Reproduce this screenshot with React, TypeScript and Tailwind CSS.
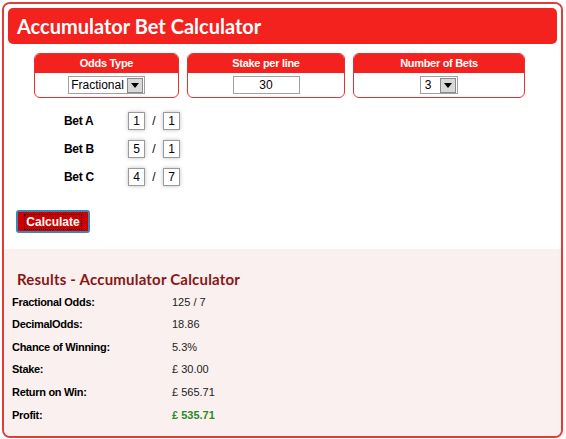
import React from "react";

const F = { fontFamily: '"Liberation Sans", Arial, sans-serif' };

function Arrow() {
  return (
    <div className="w-[16px] h-[15px] bg-[#d8d8d8] border border-[#8a8a8a] flex items-center justify-center ml-[1px]">
      <svg width="8" height="5" viewBox="0 0 8 5"><path d="M0 0h8L4 5z" fill="#000" /></svg>
    </div>
  );
}

function Box({ title, w, children }: { title: string; w: string; children: React.ReactNode }) {
  return (
    <div className={`${w} h-[45px] border border-[#e8302c] rounded-[6px] overflow-hidden flex flex-col bg-white`}>
      <div className="h-[19px] bg-[#f4221e] text-white text-[11px] font-bold flex items-center justify-center tracking-[-0.3px]">
        {title}
      </div>
      <div className="flex-1 flex items-center justify-center">{children}</div>
    </div>
  );
}

function Small({ v }: { v: string }) {
  return (
    <div className="w-[17px] h-[18px] border border-[#9a9a9a] bg-white text-[12px] text-black flex items-center justify-center shadow-[0_0_4px_rgba(0,0,0,0.25)]">
      {v}
    </div>
  );
}

export default function App() {
  const bets = [
    ["Bet A", "1", "1"],
    ["Bet B", "5", "1"],
    ["Bet C", "4", "7"],
  ];
  const rows: [string, string, boolean?][] = [
    ["Fractional Odds:", "125 / 7"],
    ["DecimalOdds:", "18.86"],
    ["Chance of Winning:", "5.3%"],
    ["Stake:", "£ 30.00"],
    ["Return on Win:", "£ 565.71"],
    ["Profit:", "£ 535.71", true],
  ];
  return (
    <div className="w-[566px] h-[439px] bg-white" style={F}>
      <div className="ml-[2px] mt-[2px] w-[561px] h-[436px] border-2 border-[#e33b36] rounded-[8px] overflow-hidden flex flex-col">
        <div className="px-[4px] pt-[4px] bg-white">
          <div className="h-[36px] bg-[#f4221e] rounded-[5px] pl-[9px] flex items-center text-white text-[20px] font-bold" style={{ fontFamily: 'Lato, sans-serif' }}>
            Accumulator Bet Calculator
          </div>
          <div className="mt-[9px] pl-[26px] flex gap-[8px]">
            <Box title="Odds Type" w="w-[145px]">
              <div className="flex items-center border border-[#a0a0a0] h-[18px] pl-[2px] pr-[1px] bg-white">
                <span className="text-[12px] text-black mr-[2px]">Fractional</span>
                <Arrow />
              </div>
            </Box>
            <Box title="Stake per line" w="w-[158px]">
              <div className="w-[67px] h-[18px] border border-[#a0a0a0] text-[12px] text-black flex items-center justify-center bg-white">30</div>
            </Box>
            <Box title="Number of Bets" w="w-[172px]">
              <div className="flex items-center border border-[#a0a0a0] h-[18px] pl-[4px] pr-[1px] bg-white">
                <span className="text-[12px] text-black mr-[8px]">3</span>
                <Arrow />
              </div>
            </Box>
          </div>
          <div className="mt-[14px] pl-[56px] flex flex-col gap-[10px]">
            {bets.map(([l, a, b]) => (
              <div key={l} className="flex items-center h-[18px]">
                <span className="w-[64px] text-[12px] font-bold text-black tracking-[-0.3px]">{l}</span>
                <Small v={a} />
                <span className="w-[18px] text-center text-[12px] text-black">/</span>
                <Small v={b} />
              </div>
            ))}
          </div>
          <div className="mt-[24px] pl-[8px] pb-[16px]">
            <button className="w-[74px] h-[23px] bg-[#cc0000] border-2 border-[#3d86b0] rounded-[3px] text-white text-[12px] font-bold flex items-center justify-center">
              <span className="outline outline-1 outline-dotted outline-black px-[1px] leading-[14px]">Calculate</span>
            </button>
          </div>
        </div>
        <div className="flex-1 bg-[#faf0ef] pt-[19px] pl-[8px]">
          <div className="pl-[5px] text-[15px] font-bold text-[#8b1515] tracking-[0.2px]" style={{ fontFamily: 'Lato, sans-serif' }}>
            Results - Accumulator Calculator
          </div>
          <div className="flex flex-col">
            {rows.map(([l, v, g]) => (
              <div key={l} className="h-[22.6px] flex items-center text-[11px]">
                <span className="w-[160px] font-bold text-black tracking-[-0.3px]">{l}</span>
                <span className={g ? "font-bold text-[#2a8a2a]" : "text-[#222]"}>{v}</span>
              </div>
            ))}
          </div>
        </div>
      </div>
    </div>
  );
}
